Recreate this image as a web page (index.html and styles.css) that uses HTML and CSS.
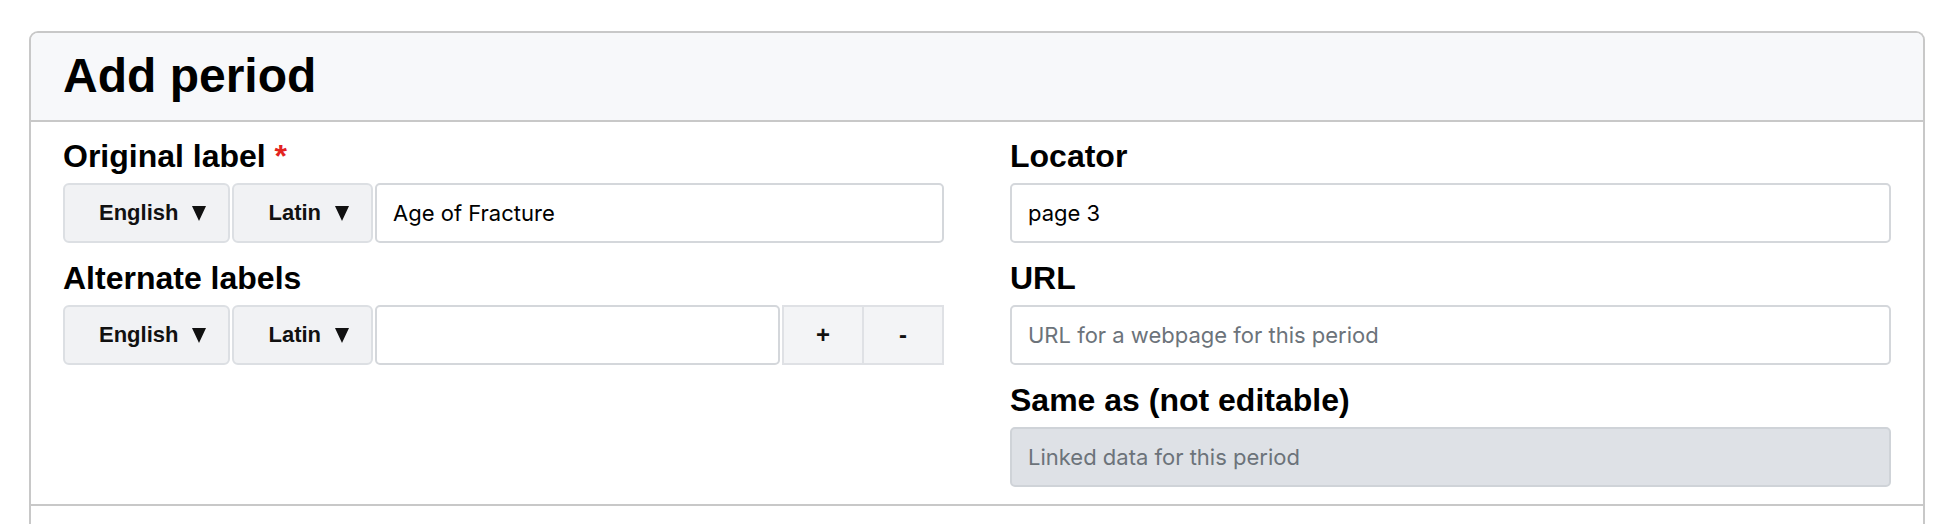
FILE: index.html
```html
<!DOCTYPE html>
<html lang="en">
<head>
  <meta charset="UTF-8" />
  <meta name="viewport" content="width=device-width, initial-scale=1.0"/>
  <title>Add period</title>
  <link rel="stylesheet" href="styles.css">
</head>
<body>

  <div class="card">
    <div class="card-header">
      <h1>Add period</h1>
    </div>

    <div class="card-body">
      <div class="column">
        <div class="field">
          <label>Original label <span class="required">*</span></label>
          <div class="input-row">
            <button class="select-btn">English <span class="caret"></span></button>
            <button class="select-btn">Latin <span class="caret"></span></button>
            <input class="text-input" type="text" value="Age of Fracture">
          </div>
        </div>

        <div class="field">
          <label>Alternate labels</label>
          <div class="input-row">
            <button class="select-btn">English <span class="caret"></span></button>
            <button class="select-btn">Latin <span class="caret"></span></button>
            <input class="text-input" type="text" value="">
            <div class="stepper">
              <button>+</button>
              <button>-</button>
            </div>
          </div>
        </div>
      </div>

      <div class="column">
        <div class="field">
          <label>Locator</label>
          <input class="text-input" type="text" value="page 3">
        </div>

        <div class="field">
          <label>URL</label>
          <input class="text-input" type="text" placeholder="URL for a webpage for this period">
        </div>

        <div class="field">
          <label>Same as (not editable)</label>
          <input class="text-input" type="text" placeholder="Linked data for this period" disabled>
        </div>
      </div>
    </div>

    <div class="card-footer"></div>
  </div>

</body>
</html>
```
FILE: styles.css
```css
body {
  margin: 0;
  background: #ffffff;
  color: #000000;
  font-family: "Liberation Sans", Arial, sans-serif;
}

.card {
  margin: 31px 27px 0 29px;
  border: 2px solid #c8c8c8;
  border-bottom: none;
  border-radius: 9px 9px 0 0;
  overflow: hidden;
}

.card-header {
  background: #f7f8fa;
  border-bottom: 2px solid #c8c8c8;
  padding: 15px 32px 16px;
}

.card-header h1 {
  margin: 0;
  font-size: 48px;
  line-height: 56px;
  font-weight: bold;
}

.card-body {
  display: grid;
  grid-template-columns: 1fr 1fr;
  column-gap: 66px;
  padding: 16px 32px 17px;
  border-bottom: 2px solid #c8c8c8;
}

.column {
  display: flex;
  flex-direction: column;
  gap: 17px;
}

.field label {
  display: block;
  font-size: 32px;
  line-height: 36px;
  font-weight: bold;
  margin-bottom: 9px;
}

.required {
  color: #e3241f;
}

.input-row {
  display: flex;
  gap: 2px;
  height: 60px;
}

.select-btn {
  display: flex;
  align-items: center;
  gap: 14px;
  height: 60px;
  padding: 0 22px 0 34px;
  background: #f1f2f4;
  border: 2px solid #dcdfe3;
  border-radius: 6px;
  font-family: "Liberation Sans", Arial, sans-serif;
  font-size: 22px;
  font-weight: bold;
  color: #111;
}

.caret {
  width: 0;
  height: 0;
  border-left: 7.5px solid transparent;
  border-right: 7.5px solid transparent;
  border-top: 15px solid #111;
}

.text-input {
  box-sizing: border-box;
  width: 100%;
  height: 60px;
  padding: 0 16px;
  border: 2px solid #d4d7db;
  border-radius: 5px;
  background: #fff;
  font-family: Inter, "Noto Sans", sans-serif;
  font-size: 22px;
  color: #000;
}

.input-row .text-input {
  flex: 1;
  min-width: 0;
}

.text-input::placeholder {
  color: #6c737a;
}

.text-input:disabled {
  background: #dee1e6;
  border-color: #cfd3d8;
}

.stepper {
  display: flex;
  width: 160px;
  border: 2px solid #dfe1e5;
  border-left: none;
  background: #f3f4f6;
}

.stepper button {
  flex: 1;
  border: none;
  border-left: 2px solid #dfe1e5;
  background: #f3f4f6;
  font-family: "Liberation Sans", Arial, sans-serif;
  font-size: 24px;
  font-weight: bold;
  color: #111;
}

.card-footer {
  height: 40px;
}
```
